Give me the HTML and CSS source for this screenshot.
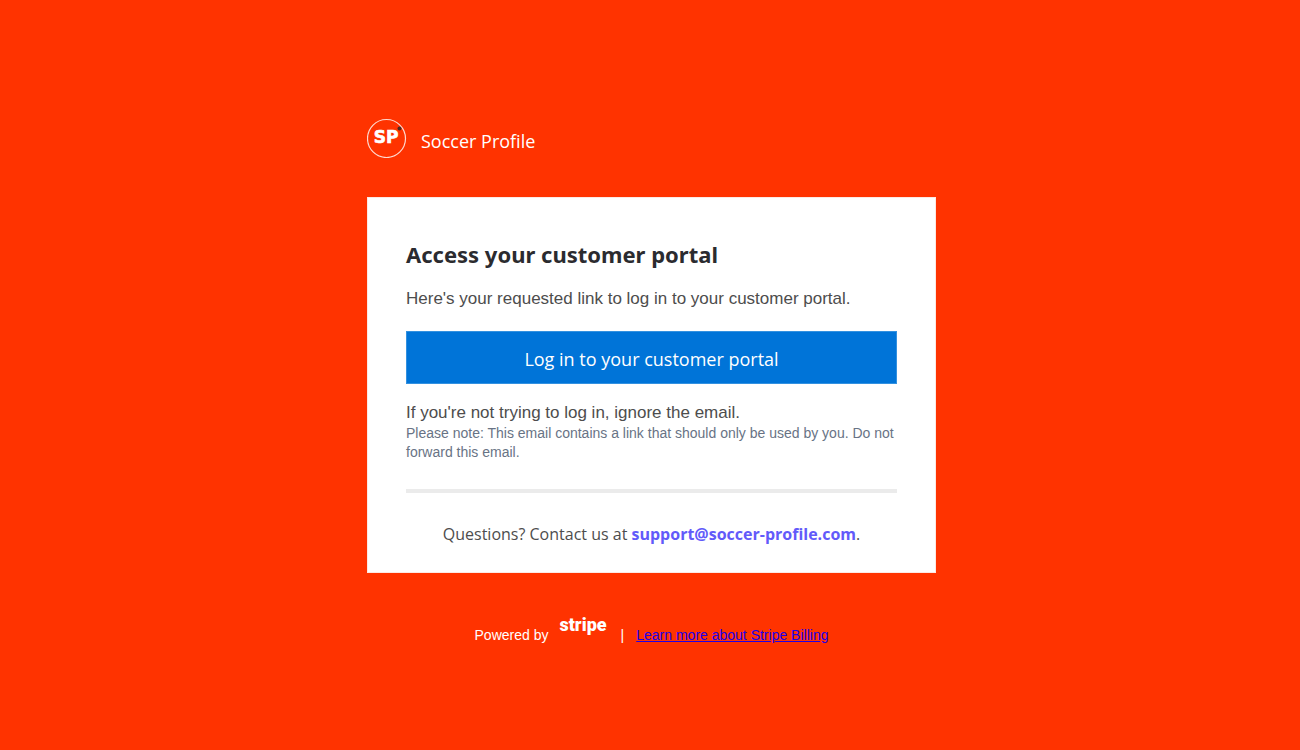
FILE: index.html
```html
<!DOCTYPE html>
<html lang="en">
<head>
<meta charset="utf-8">
<meta name="viewport" content="width=device-width, initial-scale=1">
<title>Access your customer portal</title>
<link rel="stylesheet" href="styles.css">
</head>
<body>
<div class="page">
  <header class="brand">
    <svg class="brand-logo" viewBox="0 0 40 40" aria-hidden="true">
      <circle class="ring" cx="19.500" cy="20.500" r="19"/>
      <text class="monogram" x="19" y="25" text-anchor="middle">SP</text>
      <circle class="ball" cx="32.500" cy="10.500" r="2"/>
    </svg>
    <span class="brand-name">Soccer Profile</span>
  </header>
  <main class="card">
    <h1 class="title">Access your customer portal</h1>
    <p class="lead">Here's your requested link to log in to your customer portal.</p>
    <a class="login" href="#login">Log in to your customer portal</a>
    <p class="lead">If you're not trying to log in, ignore the email.</p>
    <p class="note">Please note: This email contains a link that should only be used by you. Do not forward this email.</p>
    <hr class="rule">
    <p class="contact">Questions? Contact us at <a class="mail" href="mailto:support@soccer-profile.com">support@soccer-profile.com</a>.</p>
  </main>
  <footer class="footer">
    <span>Powered by</span>
    <span class="stripe">stripe</span>
    <span class="divider">|</span>
    <a class="learn" href="#billing">Learn more about Stripe Billing</a>
  </footer>
</div>
</body>
</html>
```
FILE: styles.css
```css
* {
  box-sizing: border-box;
}

body {
  margin: 0;
  min-height: 100vh;
  padding-left: 3px;
  background: #ff3300;
  font-family: "Liberation Sans", Arial, sans-serif;
}

.page {
  max-width: 569px;
  margin: 0 auto;
  padding-top: 118px;
}

.brand {
  display: flex;
  align-items: center;
  gap: 14px;
  margin-bottom: 39px;
}

.brand-logo {
  width: 40px;
  height: 40px;
}

.ring {
  fill: none;
  stroke: #ffd9cf;
  stroke-width: 1.2;
}

.monogram {
  fill: #fff;
  stroke: #fff;
  stroke-width: 0.6;
  font: bold 17px "DejaVu Sans", sans-serif;
}

.ball {
  fill: #4a2a22;
}

.brand-name {
  padding-top: 6px;
  color: #fff;
  font: 18px/24px "Open Sans", "Noto Sans", sans-serif;
}

.card {
  padding: 40px 38px 26px;
  background: #fff;
  border: 1px solid #fde8e3;
}

.title {
  margin: 0 0 17px;
  color: #2b2b2f;
  font: bold 22px/32px "Noto Sans", "Open Sans", sans-serif;
}

.lead {
  margin: 0;
  color: #4d4d4d;
  font-size: 17px;
  line-height: 23px;
}

.login {
  display: block;
  margin: 21px 0 17px;
  padding: 15px 0 12px;
  border: 1px solid #3391e0;
  background: #0074d8;
  color: #fff;
  font: 18px/24px "Open Sans", "Noto Sans", sans-serif;
  text-align: center;
  text-decoration: none;
}

.note {
  margin: 0;
  color: #687385;
  font-size: 14px;
  line-height: 19px;
}

.rule {
  height: 4px;
  margin: 27px 0 29px;
  border: 0;
  background: #ebebeb;
}

.contact {
  margin: 0;
  color: #4d4d4d;
  font: 16px/24px "Open Sans", "Noto Sans", sans-serif;
  text-align: center;
}

.mail {
  color: #625afa;
  font-weight: bold;
  text-decoration: none;
}

.footer {
  display: flex;
  justify-content: center;
  align-items: flex-end;
  padding-top: 40px;
  color: #fff;
  font-size: 14px;
  line-height: 18px;
}

.stripe {
  margin: 0 14px 7px 11px;
  font: 900 18px/24px Roboto, sans-serif;
}

.learn {
  margin-left: 12px;
  color: #2000e8;
}
```
